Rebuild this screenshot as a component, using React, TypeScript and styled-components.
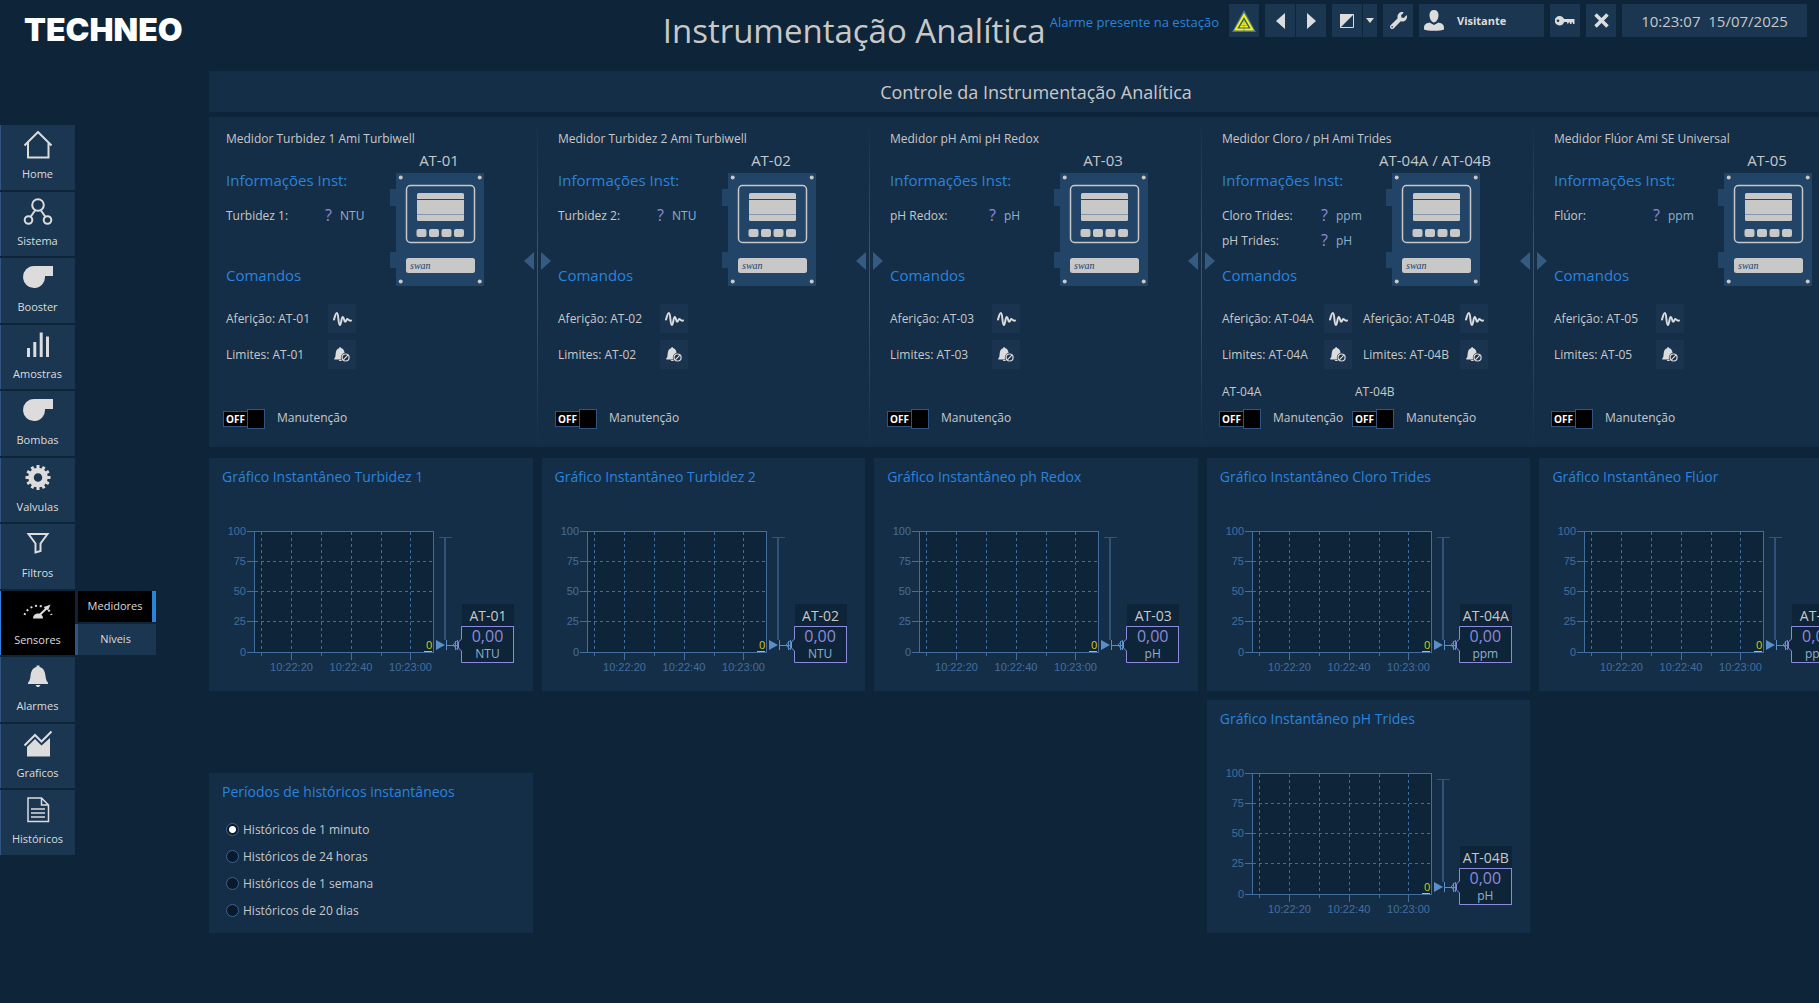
import React from "react";
import styled, { createGlobalStyle, css } from "styled-components";
import { FaWrench } from "react-icons/fa";

const color = {
  page: "#0e2438",
  panel: "#152e47",
  raised: "#1b3651",
  command: "#1a344f",
  edge: "#2f5580",
  text: "#c8c8c8",
  icon: "#dcdcdc",
  accent: "#2b83dc",
  grid: "#426e9e",
  value: "#8d8adb",
  unit: "#8fb0cc",
};

const GlobalStyle = createGlobalStyle`
  * { box-sizing: border-box; }
  html, body { margin: 0; background: ${color.page}; }
  body { overflow: hidden; }
  body, button, input {
    font-family: "Open Sans", "Noto Sans", sans-serif;
    font-size: 12px;
    line-height: 16px;
    color: ${color.text};
  }
  h1, h2, h3, p, ul, figure, fieldset { margin: 0; padding: 0; border: 0; font-weight: 400; }
  ul { list-style: none; }
  button { border: 0; padding: 0; margin: 0; background: none; cursor: pointer; }
  svg { display: block; }
`;

const Page = styled.div`
  min-height: 100vh;
  overflow: hidden;
`;

/* ---------- header ---------- */

const Header = styled.header`
  display: flex;
  align-items: flex-start;
  height: 71px;
  padding: 4px 12px 0 24px;
`;

const Logo = styled.div`
  margin-right: auto;
  padding-top: 10px;
  font-family: Inter, sans-serif;
  font-weight: 900;
  font-size: 32px;
  line-height: 32px;
  color: #fff;
`;

const PageTitle = styled.h1`
  font-size: 33px;
  line-height: 54px;
  white-space: nowrap;
`;

const AlarmText = styled.p`
  margin: 0 10px 0 4px;
  font-size: 13px;
  line-height: 36px;
  color: ${color.accent};
  white-space: nowrap;
`;

const Toolbar = styled.div`
  display: flex;
  gap: 6px;
`;

const ToolGroup = styled.div`
  display: flex;
  gap: 1px;
`;

const ToolButton = styled.button<{ $w?: number }>`
  display: flex;
  align-items: center;
  justify-content: center;
  width: ${(p) => p.$w ?? 30}px;
  height: 33px;
  background: ${color.raised};
  color: ${color.icon};
`;

const UserButton = styled(ToolButton)`
  justify-content: flex-start;
  gap: 13px;
  padding-left: 5px;
  font-size: 11px;
  font-weight: 700;
`;

const Clock = styled.time`
  width: 185px;
  height: 33px;
  background: ${color.raised};
  font-size: 15px;
  line-height: 34px;
  text-align: center;
  white-space: pre;
`;

/* ---------- side navigation ---------- */

const Body = styled.div`
  display: grid;
  grid-template-columns: 209px 1fr;
`;

const Nav = styled.nav`
  padding-top: 54px;
`;

const NavList = styled.ul`
  display: grid;
  grid-auto-rows: 1fr;
  gap: 2px;
  width: 75px;
  height: 730px;
`;

const NavItem = styled.li`
  position: relative;
`;

const NavLink = styled.a<{ $active?: boolean }>`
  display: flex;
  flex-direction: column;
  align-items: center;
  gap: 7px;
  height: 100%;
  padding: 6px 1px 0 0;
  border-left: 1px solid ${(p) => (p.$active ? color.accent : color.edge)};
  background: ${(p) => (p.$active ? "#000" : color.raised)};
  color: ${color.icon};
  font-size: 11px;
  text-decoration: none;
`;

const SubMenu = styled.ul`
  position: absolute;
  top: 0;
  left: 75px;
  display: grid;
  gap: 2px;
  width: 81px;
`;

const SubLink = styled.a<{ $active?: boolean }>`
  display: block;
  height: 31px;
  font-size: 11px;
  line-height: 30px;
  text-align: center;
  text-decoration: none;
  color: ${color.icon};
  border: 0 solid ${color.edge};
  ${(p) =>
    p.$active
      ? css`
          margin-left: 3px;
          border-right: 4px solid ${color.accent};
          background: #000;
        `
      : css`
          padding-right: 3px;
          border-left-width: 3px;
          background: ${color.raised};
        `}
`;

/* ---------- meters ---------- */

const Main = styled.main`
  min-width: 1654px;
`;

const Banner = styled.h2`
  height: 41px;
  background: ${color.panel};
  font-size: 18px;
  line-height: 43px;
  text-align: center;
`;

const MeterPanel = styled.section`
  display: flex;
  margin-top: 5px;
  padding: 0 11px 0 10px;
  background: ${color.panel};
`;

const Meter = styled.article`
  flex: 1 0 305px;
  padding: 14px 0 18px 4px;
`;

const MeterBody = styled.div`
  padding-left: 3px;
`;

const MeterTop = styled.div`
  display: flex;
`;

const MeterInfo = styled.div`
  flex: 0 0 164px;
  padding-top: 21px;
`;

const Heading = styled.h3`
  font-size: 15px;
  line-height: 24px;
  color: ${color.accent};
  white-space: nowrap;
`;

const CardTitle = styled(Heading)`
  font-size: 14px;
`;

const Readings = styled.div`
  min-height: 50px;
  margin: 11px 0 10px;
`;

const Reading = styled.div`
  display: grid;
  grid-template-columns: 99px 15px 1fr;
  line-height: 25px;
`;

const Pending = styled.span`
  font-size: 16px;
  color: ${color.value};
`;

const Unit = styled.span`
  color: ${color.unit};
`;

const Device = styled.figure`
  display: flex;
  flex-direction: column;
  align-items: center;
  gap: 3px;
  width: 94px;
  padding-top: 3px;
`;

const DeviceName = styled.figcaption`
  padding-left: 4px;
  font-size: 15px;
  line-height: 20px;
  white-space: nowrap;
`;

const Commands = styled.div`
  display: grid;
  grid-template-columns: 102px 28px 11px 97px 28px;
  grid-auto-rows: 29px;
  row-gap: 7px;
  align-items: center;
  margin-top: 17px;
  white-space: nowrap;
`;

const CommandLabel = styled.span<{ $second: boolean }>`
  grid-column: ${(p) => (p.$second ? 4 : 1)};
`;

const CommandButton = styled.button`
  display: flex;
  align-items: center;
  justify-content: center;
  height: 29px;
  background: ${color.command};
  color: ${color.icon};
`;

const Switches = styled.div`
  display: flex;
  margin-top: 15px;
`;

const SwitchGroup = styled.div`
  width: 133px;
`;

const SwitchTag = styled.div`
  height: 16px;
  margin-bottom: 9px;
  padding-left: 3px;
`;

const Toggle = styled.label`
  display: flex;
  height: 20px;
  line-height: 17px;
`;

const ToggleInput = styled.input`
  position: absolute;
  opacity: 0;
  width: 42px;
  height: 20px;
  margin: 0;
`;

const Track = styled.span`
  width: 24px;
  height: 16px;
  margin-top: 2px;
  padding-left: 2px;
  border: 1px solid ${color.edge};
  border-right: 0;
  background: #000;
  color: #fff;
  font-weight: 700;
  font-size: 10px;
  line-height: 14px;
`;

const Thumb = styled.span`
  width: 18px;
  height: 20px;
  margin-right: 12px;
  border: 1px solid ${color.edge};
  background: #000;
`;

const Splitter = styled.div`
  display: flex;
  justify-content: center;
  align-items: center;
  gap: 3px;
  flex: 0 0 27px;
  margin: 3px 0 45px;
  color: #355b83;
`;

const SplitLine = styled.span`
  align-self: stretch;
  width: 1px;
  margin-bottom: -43px;
  background: linear-gradient(transparent, ${color.edge} 40%, ${color.edge} 55%, transparent);
`;

/* ---------- charts ---------- */

const Cards = styled.section`
  display: grid;
  grid-template-columns: repeat(5, 1fr);
  gap: 9px;
  margin-top: 11px;
`;

const Card = styled.article<{ $col?: number }>`
  grid-column: ${(p) => p.$col ?? "auto"};
  align-self: end;
  padding: 7px 10px 15px 13px;
  background: ${color.panel};
`;

const ChartRow = styled.div`
  display: flex;
  align-items: flex-end;
  margin-top: 32px;
`;

const Tag = styled.div`
  width: 52px;
  margin-bottom: 13px;
  background: ${color.page};
  text-align: center;
  white-space: nowrap;
`;

const TagName = styled.div`
  height: 22px;
  font-size: 14px;
  line-height: 24px;
`;

const TagValue = styled.div`
  height: 37px;
  border: 1px solid ${color.value};
  border-left: 0;
  color: ${color.unit};
  line-height: 18px;
`;

const Amount = styled.div`
  font-size: 16px;
  line-height: 18px;
  color: ${color.value};
`;

const PeriodCard = styled.fieldset`
  align-self: end;
  min-width: 0;
  padding: 7px 13px 9px;
  background: ${color.panel};
`;

const PeriodList = styled.div`
  display: grid;
  grid-auto-rows: 27px;
  margin-top: 12px;
  padding-left: 4px;
`;

const Period = styled.label`
  display: flex;
  align-items: center;
  gap: 4px;
`;

const Radio = styled.input`
  appearance: none;
  width: 13px;
  height: 13px;
  margin: 0;
  border: 1px solid #3a6491;
  border-radius: 50%;
  background: #0a1a2a;
  &:checked {
    background: radial-gradient(circle, #fff 3px, #0a1a2a 4px);
  }
`;

/* ---------- drawings ---------- */

const Glyph = ({ children }: { children: React.ReactNode }) => (
  <svg width="30" height="28" viewBox="0 0 30 28" fill="none" stroke="currentColor" strokeWidth="2">
    {children}
  </svg>
);

const gearTeeth = Array.from({ length: 12 }, (_, i) => i * 30);

const glyphs: Record<string, React.ReactNode> = {
  home: (
    <Glyph>
      <path d="M1.500 14.500 15 1 28.500 14.500M5 11.500V26.500H25.500V11.500" />
    </Glyph>
  ),
  system: (
    <Glyph>
      <circle cx="15" cy="7" r="5.800" />
      <circle cx="5.500" cy="22" r="3.800" />
      <circle cx="24.500" cy="22" r="3.800" />
      <path d="M12 12.500 7.500 19M18 12.500 22.500 19" />
    </Glyph>
  ),
  pump: (
    <Glyph>
      <path fill="currentColor" stroke="none" d="M11 2H30V12H22A11 11 0 1 1 11 2Z" />
    </Glyph>
  ),
  bars: (
    <Glyph>
      <path strokeWidth="3" d="M5.500 26V17M11.800 26V11M18.200 26V1.500M24.500 26V5.500" />
    </Glyph>
  ),
  gear: (
    <Glyph>
      <circle cx="15" cy="13.500" r="7" strokeWidth="5.500" />
      {gearTeeth.map((a) => (
        <path key={a} d="M15 1V5" strokeWidth="3" transform={`rotate(${a} 15 13.500)`} />
      ))}
    </Glyph>
  ),
  filter: (
    <Glyph>
      <path d="M5.500 4H24.500L17.500 13.500V21L12.500 22.500V13.500Z" />
    </Glyph>
  ),
  gauge: (
    <Glyph>
      <path strokeDasharray="2 2.800" d="M1.500 18A14 12.500 0 0 1 28.500 18" />
      <path fill="currentColor" stroke="none" d="M10 21.500C10 18 12.500 16.500 15 16.500S20 18 20 21.500Z" />
      <path d="M16 18.500 24 11" />
      <path fill="currentColor" stroke="none" d="M27.500 7.500 21.500 10 25 13.500Z" />
    </Glyph>
  ),
  bell: (
    <Glyph>
      <path
        fill="currentColor"
        stroke="none"
        d="M13.500 2.500H16.500V4C21 5 22 9 22.500 13 22.800 17 24 18.500 25 19.500V21H5V19.500C6 18.500 7.200 17 7.500 13 8 9 9 5 13.500 4ZM12.500 22H17.500L16 24H14Z"
      />
    </Glyph>
  ),
  area: (
    <Glyph>
      <path d="M1.500 15.500 12 5 18.500 11.500 28.500 1.500" />
      <path fill="currentColor" stroke="none" d="M4 26.500V17L12 9 18.500 15.500 27 8V26.500Z" />
    </Glyph>
  ),
  file: (
    <Glyph>
      <path strokeWidth="1.500" d="M5 2H18.500L25.500 9V25.500H5ZM18.500 2V9H25.500M8 13H22M8 17H22M8 21H22" />
    </Glyph>
  ),
};

const Wave = () => (
  <svg width="19" height="14" viewBox="0 0 19 14" fill="none" stroke="currentColor" strokeWidth="2" strokeLinecap="round" strokeLinejoin="round">
    <path d="M1 7.500C2 4 2.700 1 3.900 1 5.800 1 5 13 6.900 13 8.400 13 8.200 5 9.800 5 11.200 5 10.800 9.800 12.200 9.800 13.300 9.800 13.200 7 14.300 7 15.300 7 15.500 9 18 8.600" />
  </svg>
);

const BellOff = () => (
  <svg width="16" height="15" viewBox="0 0 16 15" fill="none" stroke="currentColor">
    <path
      fill="currentColor"
      stroke="none"
      d="M5.500 0H6.700V1C9 1.500 10.200 3.200 10.600 5.800A4.600 4.600 0 0 0 7.500 12.600H.5L0 12C1.500 10.500 1.400 9 1.700 6.500 2 3.500 3 1.600 5.500 1ZM4.600 13H7.600V14H5.500Z"
    />
    <circle cx="11.600" cy="10.500" r="3.500" strokeWidth="1.200" />
    <path d="M9.300 12.800 13.900 8.200" strokeWidth="1.200" />
  </svg>
);

const AlarmIcon = () => (
  <svg width="24" height="22" viewBox="0 0 24 22">
    <path fill="#4b719c" d="M12 0 24 22H0Z" />
    <path fill="#f6f60a" d="M12 3 22 20.500H2Z" />
    <path fill="#35597f" d="M12 7 18.700 18.500H5.300Z" />
    <path fill="#f6f60a" d="M12 10 16.500 17.500H7.500Z" />
    <path stroke="#35597f" strokeWidth="1" d="M9 15.500H15M12 11V22" opacity=".4" />
  </svg>
);

const Triangle = ({ left }: { left?: boolean }) => (
  <svg width="9" height="16" viewBox="0 0 9 16" fill="currentColor">
    <path d={left ? "M9 0V16L0 8Z" : "M0 0V16L9 8Z"} />
  </svg>
);

const ContrastIcon = () => (
  <svg width="14" height="14" viewBox="0 0 14 14">
    <path d="M.5.5H13.500V13.500H.5Z" fill="none" stroke="currentColor" />
    <path d="M0 0H14L0 14Z" fill="currentColor" />
  </svg>
);

const DropIcon = () => (
  <svg width="8" height="5" viewBox="0 0 8 5" fill="currentColor">
    <path d="M0 0H8L4 5Z" />
  </svg>
);

const UserIcon = () => (
  <svg width="20" height="21" viewBox="0 0 20 21" fill="currentColor">
    <path d="M10 0C13 0 14.500 2 14.500 5 14.500 8.500 12.500 12.500 10 12.500S5.500 8.500 5.500 5C5.500 2 7 0 10 0ZM5.500 12.500 10 15 14.500 12.500C18.500 13.500 20 14.500 20 18.500V19.500C17 21.300 3 21.300 0 19.500V18.500C0 14.500 1.500 13.500 5.500 12.500Z" />
  </svg>
);

const KeyIcon = () => (
  <svg width="20" height="10" viewBox="0 0 20 10" fill="currentColor">
    <path fillRule="evenodd" d="M4.500 0C7 0 8.500 1.500 9 3H19.500V8H18V6.500H16.500V8H15V6.500H13.500V7.500H12V6H9C8.500 8 7 9.500 4.500 9.500A4.700 4.700 0 0 1 4.500 0ZM3 3.500A1.300 1.300 0 1 0 3 6.100 1.300 1.300 0 1 0 3 3.500Z" />
  </svg>
);

const CloseIcon = () => (
  <svg width="15" height="15" viewBox="0 0 15 15" stroke="currentColor" strokeWidth="3.500">
    <path d="M1.500 1.500 13.500 13.500M13.500 1.500 1.500 13.500" />
  </svg>
);

const Arrow = ({ left }: { left?: boolean }) => (
  <svg width="10" height="18" viewBox="0 0 10 18" fill="currentColor">
    <path d={left ? "M10 0V18L0 9Z" : "M0 0V18L10 9Z"} />
  </svg>
);

const DeviceDrawing = () => (
  <svg width="94" height="113" viewBox="0 0 94 113">
    <path fill="#224467" d="M6 0H94V113H6V95H0V79H6V33H0V16H6Z" />
    <g fill="#c8c8c8">
      <circle cx="10.700" cy="4.500" r="2" />
      <circle cx="89.700" cy="4.500" r="2" />
      <circle cx="10.700" cy="108.500" r="2" />
      <circle cx="89.700" cy="108.500" r="2" />
      <rect x="27" y="20" width="47" height="28" rx="1.500" />
      <rect x="26.500" y="56" width="10" height="8" rx="2" />
      <rect x="39" y="56" width="10" height="8" rx="2" />
      <rect x="51.500" y="56" width="10" height="8" rx="2" />
      <rect x="64" y="56" width="10" height="8" rx="2" />
      <rect x="16" y="85" width="69" height="15" rx="2.500" />
    </g>
    <rect x="16.500" y="12.500" width="68" height="57" rx="4" fill="none" stroke="#c8c8c8" strokeWidth="1.500" />
    <path d="M27 26.500H74" stroke="#224467" />
    <path d="M27 41.500H74" stroke="#8796a8" />
    <text x="20" y="96" fontFamily="Liberation Serif, serif" fontStyle="italic" fontSize="10" fill="#224467">
      swan
    </text>
  </svg>
);

const gridX = [39.5, 69.5, 99.5, 129.5, 159.5, 188.5];
const gridY = [40.5, 70.5, 100.5];
const axisY = [100, 75, 50, 25, 0];
const axisX = ["10:22:20", "10:22:40", "10:23:00"];

const Plot = () => (
  <svg width="240" height="155" viewBox="0 0 240 155" shapeRendering="crispEdges" fill="none" stroke={color.grid}>
    <rect x="32.500" y="10.500" width="179" height="121" fill={color.page} />
    {gridX.map((x, i) => (
      <g key={x}>
        <path d={`M${x} 11V131`} strokeDasharray="3 3" />
        <path d={`M${x} 132V${i % 2 ? 139 : 135}`} />
      </g>
    ))}
    {gridY.map((y) => (
      <path key={y} d={`M33 ${y}H211`} strokeDasharray="3 3" />
    ))}
    {axisY.map((v, i) => (
      <React.Fragment key={v}>
        <path d={`M25 ${i === 4 ? 131.5 : 10.5 + i * 30}H32`} />
        <text x="24" y={(i === 4 ? 131 : 10 + i * 30) + 4} textAnchor="end" fontFamily="Liberation Sans, sans-serif" fontSize="11" fill={color.grid} stroke="none">
          {v}
        </text>
      </React.Fragment>
    ))}
    {axisX.map((t, i) => (
      <text key={t} x={69.5 + i * 59.5} y="150" textAnchor="middle" fontFamily="Liberation Sans, sans-serif" fontSize="11" fill={color.grid} stroke="none">
        {t}
      </text>
    ))}
    <text x="204" y="128" fontSize="11" fill="#d2d20f" stroke="none">
      0
    </text>
    <path d="M202 130.500H210" stroke="#aab8c6" />
    <path d="M217 16.500H230" stroke="#2e5278" />
    <path d="M223 17V119" stroke="#2e5278" strokeWidth="2" />
    <g stroke="#5a8fc6">
      <path shapeRendering="auto" d="M214 119V129L223 124Z" fill="#5a8fc6" stroke="none" />
      <path d="M224.500 119V129M225 124.500H235M233.500 120V129M235.500 119V129" />
      <path shapeRendering="auto" d="M231 124 235 119.500M231 124 235 128.500" />
    </g>
    <path shapeRendering="auto" stroke={color.value} fill={color.page} d="M240 105.500H239.500V118L236.500 121V127L239.500 130V141.500H240" />
  </svg>
);

/* ---------- data ---------- */

const navItems = [
  ["Home", "home"],
  ["Sistema", "system"],
  ["Booster", "pump"],
  ["Amostras", "bars"],
  ["Bombas", "pump"],
  ["Valvulas", "gear"],
  ["Filtros", "filter"],
  ["Sensores", "gauge"],
  ["Alarmes", "bell"],
  ["Graficos", "area"],
  ["Históricos", "file"],
];

const meters = [
  { title: "Medidor Turbidez 1 Ami Turbiwell", name: "AT-01", tags: ["AT-01"], readings: [["Turbidez 1:", "NTU"]] },
  { title: "Medidor Turbidez 2 Ami Turbiwell", name: "AT-02", tags: ["AT-02"], readings: [["Turbidez 2:", "NTU"]] },
  { title: "Medidor pH Ami pH Redox", name: "AT-03", tags: ["AT-03"], readings: [["pH Redox:", "pH"]] },
  {
    title: "Medidor Cloro / pH Ami Trides",
    name: "AT-04A / AT-04B",
    tags: ["AT-04A", "AT-04B"],
    readings: [["Cloro Trides:", "ppm"], ["pH Trides:", "pH"]],
  },
  { title: "Medidor Flúor Ami SE Universal", name: "AT-05", tags: ["AT-05"], readings: [["Flúor:", "ppm"]] },
];

const charts = [
  { title: "Turbidez 1", tag: "AT-01", unit: "NTU" },
  { title: "Turbidez 2", tag: "AT-02", unit: "NTU" },
  { title: "ph Redox", tag: "AT-03", unit: "pH" },
  { title: "Cloro Trides", tag: "AT-04A", unit: "ppm" },
  { title: "Flúor", tag: "AT-05", unit: "ppm" },
];

const periods = ["1 minuto", "24 horas", "1 semana", "20 dias"];

/* ---------- composition ---------- */

const ChartCard = ({ title, tag, unit, col }: { title: string; tag: string; unit: string; col?: number }) => (
  <Card $col={col}>
    <CardTitle>Gráfico Instantâneo {title}</CardTitle>
    <ChartRow>
      <Plot />
      <Tag>
        <TagName>{tag}</TagName>
        <TagValue>
          <Amount>0,00</Amount>
          {unit}
        </TagValue>
      </Tag>
    </ChartRow>
  </Card>
);

const MeterColumn = ({ meter }: { meter: (typeof meters)[number] }) => (
  <Meter>
    <MeterBody>
      <p>{meter.title}</p>
      <MeterTop>
        <MeterInfo>
          <Heading>Informações Inst:</Heading>
          <Readings>
            {meter.readings.map(([label, unit]) => (
              <Reading key={label}>
                <span>{label}</span>
                <Pending>?</Pending>
                <Unit>{unit}</Unit>
              </Reading>
            ))}
          </Readings>
          <Heading>Comandos</Heading>
        </MeterInfo>
        <Device>
          <DeviceName>{meter.name}</DeviceName>
          <DeviceDrawing />
        </Device>
      </MeterTop>
      <Commands>
        {["Aferição", "Limites"].map((kind) =>
          meter.tags.map((tag, i) => (
            <React.Fragment key={kind + tag}>
              <CommandLabel $second={i === 1}>
                {kind}: {tag}
              </CommandLabel>
              <CommandButton aria-label={`${kind} ${tag}`}>{kind === "Limites" ? <BellOff /> : <Wave />}</CommandButton>
            </React.Fragment>
          ))
        )}
      </Commands>
    </MeterBody>
    <Switches>
      {meter.tags.map((tag) => (
        <SwitchGroup key={tag}>
          <SwitchTag>{meter.tags.length > 1 && tag}</SwitchTag>
          <Toggle>
            <ToggleInput type="checkbox" />
            <Track>OFF</Track>
            <Thumb />
            <span>Manutenção</span>
          </Toggle>
        </SwitchGroup>
      ))}
    </Switches>
  </Meter>
);

export default function App() {
  return (
    <Page>
      <GlobalStyle />
      <Header>
        <Logo>TECHNEO</Logo>
        <PageTitle>Instrumentação Analítica</PageTitle>
        <AlarmText>Alarme presente na estação</AlarmText>
        <Toolbar>
          <ToolButton aria-label="Alarmes"><AlarmIcon /></ToolButton>
          <ToolGroup>
            <ToolButton aria-label="Anterior"><Triangle left /></ToolButton>
            <ToolButton aria-label="Próximo"><Triangle /></ToolButton>
          </ToolGroup>
          <ToolGroup>
            <ToolButton aria-label="Tema"><ContrastIcon /></ToolButton>
            <ToolButton $w={14} aria-label="Opções de tema"><DropIcon /></ToolButton>
          </ToolGroup>
          <ToolButton aria-label="Ferramentas"><FaWrench size={17} /></ToolButton>
          <UserButton $w={125}><UserIcon />Visitante</UserButton>
          <ToolButton aria-label="Senha"><KeyIcon /></ToolButton>
          <ToolButton aria-label="Sair"><CloseIcon /></ToolButton>
          <Clock>{"10:23:07  15/07/2025"}</Clock>
        </Toolbar>
      </Header>
      <Body>
        <Nav>
          <NavList>
            {navItems.map(([label, glyph]) => (
              <NavItem key={label}>
                <NavLink href="#" $active={label === "Sensores"}>
                  {glyphs[glyph]}
                  {label}
                </NavLink>
                {label === "Sensores" && (
                  <SubMenu>
                    <li><SubLink href="#" $active>Medidores</SubLink></li>
                    <li><SubLink href="#">Níveis</SubLink></li>
                  </SubMenu>
                )}
              </NavItem>
            ))}
          </NavList>
        </Nav>
        <Main>
          <Banner>Controle da Instrumentação Analítica</Banner>
          <MeterPanel>
            {meters.map((meter, i) => (
              <React.Fragment key={meter.name}>
                {i > 0 && (
                  <Splitter>
                    <Arrow left />
                    <SplitLine />
                    <Arrow />
                  </Splitter>
                )}
                <MeterColumn meter={meter} />
              </React.Fragment>
            ))}
          </MeterPanel>
          <Cards>
            {charts.map((c) => (
              <ChartCard key={c.tag} {...c} />
            ))}
            <PeriodCard>
              <CardTitle>Períodos de históricos instantâneos</CardTitle>
              <PeriodList>
                {periods.map((p, i) => (
                  <Period key={p}>
                    <Radio type="radio" name="periodo" defaultChecked={i === 0} />
                    Históricos de {p}
                  </Period>
                ))}
              </PeriodList>
            </PeriodCard>
            <ChartCard title="pH Trides" tag="AT-04B" unit="pH" col={4} />
          </Cards>
        </Main>
      </Body>
    </Page>
  );
}
